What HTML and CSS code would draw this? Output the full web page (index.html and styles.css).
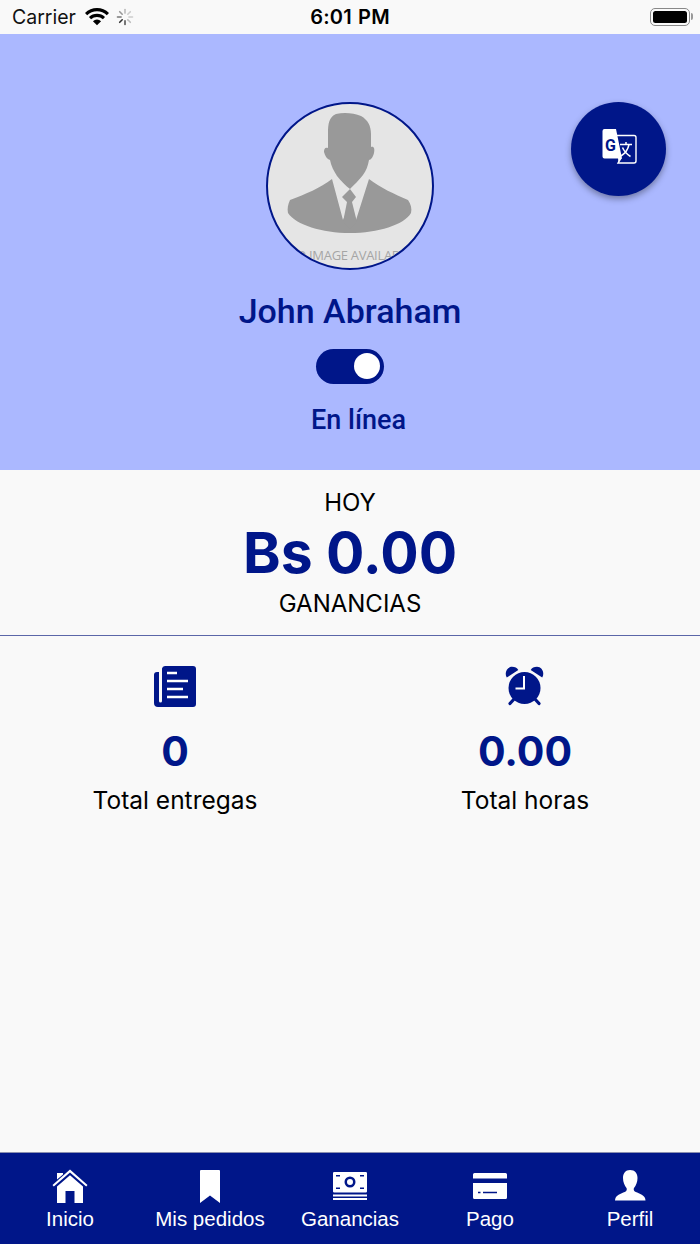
FILE: index.html
```html
<!DOCTYPE html>
<html>
<head>
	<meta charset="utf-8">
	<title>Inicio</title>
	<link rel="stylesheet" href="styles.css">
</head>
<body>
<div class="app">
	<div class="status">
		<div class="status-left">
			<span class="carrier">Carrier</span>
			<svg class="wifi" width="24" height="18" viewBox="0 0 26 19">
				<path d="M13 18.500 8.600 14a6.300 6.300 0 0 1 8.800 0z" fill="#000"/>
				<path d="M6.600 12 4.300 9.600a12.400 12.400 0 0 1 17.400 0L19.400 12a9.100 9.100 0 0 0-12.800 0z" fill="#000"/>
				<path d="M2.400 7.600 0 5.200a18.400 18.400 0 0 1 26 0l-2.400 2.400a15 15 0 0 0-21.200 0z" fill="#000"/>
			</svg>
			<svg class="spin" width="18" height="18" viewBox="0 0 18 18" stroke-width="1.600" stroke-linecap="round">
				<path d="M9 1.500v3.600" stroke="#bbb"/>
				<path d="M14.300 3.700l-2.500 2.500" stroke="#ccc"/>
				<path d="M16.500 9h-3.600" stroke="#ccc"/>
				<path d="M14.300 14.300l-2.500-2.500" stroke="#bbb"/>
				<path d="M9 16.500v-3.600" stroke="#555"/>
				<path d="M3.700 14.300l2.500-2.500" stroke="#333"/>
				<path d="M1.500 9h3.600" stroke="#777"/>
				<path d="M3.700 3.700l2.500 2.500" stroke="#999"/>
			</svg>
		</div>
		<span class="time">6:01 PM</span>
		<div class="battery"><i></i></div>
	</div>

	<div class="head">
		<div class="avatar">
			<svg width="164" height="164" viewBox="0 0 164 164">
				<!-- suit -->
				<path fill="#999" d="M64 75C52 84 38 90 22 96c-2 4-3 9-2 13 8 12 34 20 62 20s54-8 61-20c1-4 0-9-3-13-14-6-27-12-39-21z"/>
				<!-- shirt -->
				<path fill="#e5e5e5" d="M64 75 75 116 82 100 88 116 101 75z"/>
				<!-- tie -->
				<path fill="#999" d="M82 85l6 8-4 5 5 20-7 7-7-7 4-20-5-5z"/>
				<!-- head -->
				<path fill="#999" d="M68 10c8-2 18-1 25 2 7 4 10 10 10 18v13c3-1 4 2 3 6s-3 7-5 7c-1 6-3 11-6 15-4 5-9 10-13 14-4-3-9-8-13-13-3-5-6-10-7-16-3-1-5-4-6-8 0-3 1-5 4-4V29c0-9 1-16 8-19z"/>
				<text class="noimg" x="82" y="156" text-anchor="middle">NO IMAGE AVAILABLE</text>
			</svg>
		</div>
		<h1 class="name">John Abraham</h1>
		<div class="toggle"><i></i></div>
		<p class="online">En línea</p>
		<div class="fab">
			<svg width="36" height="36" viewBox="0 0 36 36">
				<path fill="#001689" stroke="#fff" stroke-width="1.400" d="M14 6.500h19a2 2 0 0 1 2 2V32a2 2 0 0 1-2 2H17l2-3.500z"/>
				<path fill="#fff" d="M3.500 0H15l6 29.500H3.500a2 2 0 0 1-2-2V2a2 2 0 0 1 2-2z"/>
				<path fill="#fff" d="M17 29h4l-3.500 5z"/>
				<text class="fab-g" x="9.500" y="21.700" text-anchor="middle">G</text>
				<path fill="none" stroke="#fff" stroke-width="1.500" d="M19 15.500h12M25 13v2.500M28 15.500c-1 5-4 9-8 11.500M21.500 18.500c1.500 3.500 4 6.500 8 9"/>
			</svg>
		</div>
	</div>

	<div class="today">
		<div class="today-top">HOY</div>
		<div class="amount">Bs 0.00</div>
		<div class="today-sub">GANANCIAS</div>
	</div>

	<div class="stats">
		<div class="stat">
			<svg width="44" height="44" viewBox="0 0 44 44">
				<path fill="#001689" d="M9 3.500a3 3 0 0 1 3-2.500h28a3 3 0 0 1 3 3v35a3 3 0 0 1-3 3H5a4 4 0 0 1-4-4V10a3 3 0 0 1 3-3h2v29a1.500 1.500 0 0 0 3 0z"/>
				<path stroke="#fff" stroke-width="2.600" d="M14 8h10M14 16h21M14 24h16M14 32h21"/>
			</svg>
			<div class="stat-num">0</div>
			<div class="stat-label">Total entregas</div>
		</div>
		<div class="stat">
			<svg width="44" height="44" viewBox="0 0 44 44">
				<circle cx="21.500" cy="23" r="16" fill="#001689"/>
				<path fill="#001689" d="M3.800 12.500C1 8 4 1.800 9 1.800c3 0 5 1 6.300 3.200zM39.200 12.500C42 8 39 1.800 34 1.800c-3 0-5 1-6.300 3.200z"/>
				<path stroke="#001689" stroke-width="3.200" stroke-linecap="round" d="M12 33l-5 5.500M31 33l5 5.500"/>
				<path fill="none" stroke="#fff" stroke-width="2" d="M21 11v12.500H12.500"/>
			</svg>
			<div class="stat-num">0.00</div>
			<div class="stat-label">Total horas</div>
		</div>
	</div>

	<div class="tabs">
		<div class="tab">
			<svg width="36" height="36" viewBox="0 0 36 36">
				<path fill="#fff" d="M.500 16 18 .500 35.500 16l-1.300 1.500L18 3.500 1.800 17.500zM5 4h6v1.500L5 10.500z"/>
				<path fill="#fff" fill-rule="evenodd" d="M5 17.500 18 6.200l13 11.300V34H5zM13.500 22v12h9V22z"/>
			</svg>
			<span>Inicio</span>
		</div>
		<div class="tab">
			<svg width="36" height="36" viewBox="0 0 36 36">
				<path fill="#fff" d="M8 2a1 1 0 0 1 1-1h18a1 1 0 0 1 1 1v32l-10-7.500L8 34z"/>
			</svg>
			<span>Mis pedidos</span>
		</div>
		<div class="tab">
			<svg width="36" height="36" viewBox="0 0 36 36">
				<path fill="#fff" fill-rule="evenodd" d="M2 3h32a1.500 1.500 0 0 1 1 1v18.500a1.500 1.500 0 0 1-1 1H2a1.500 1.500 0 0 1-1-1V4a1.500 1.500 0 0 1 1-1zM18 7.500a5.500 5.500 0 1 0 0 11 5.500 5.500 0 0 0 0-11zm0 2.500a3 3 0 1 1 0 6 3 3 0 0 1 0-6zM4 6v1.500h4V6zM28 6v1.500h4V6zM4 18.500V20h4v-1.500zM28 18.500V20h4v-1.500z"/>
				<path stroke="#fff" stroke-width="2" d="M1 26.500h34M1 30h34"/>
			</svg>
			<span>Ganancias</span>
		</div>
		<div class="tab">
			<svg width="36" height="36" viewBox="0 0 36 36">
				<path fill="#fff" d="M2.500 4h31A1.500 1.500 0 0 1 35 5.500V9.500H1V5.500A1.500 1.500 0 0 1 2.500 4zM1 14h34v14.500a1.500 1.500 0 0 1-1.500 1.500h-31A1.500 1.500 0 0 1 1 28.500z"/>
				<path stroke="#001689" stroke-width="1.500" d="M6 23.500h2.500M11 23.500h14"/>
			</svg>
			<span>Pago</span>
		</div>
		<div class="tab">
			<svg width="36" height="36" viewBox="0 0 36 36">
				<path fill="#fff" d="M18 1c5 0 7.500 3.500 7.500 8 0 4-1.500 7.500-3.500 10-.5 1-.3 2.500.5 3.200 3 2 9 3 10.500 6.800.3 1 .5 2 .5 2.500H3c0-.5.200-1.500.5-2.500C5 25.200 11 24.200 14 22.200c.8-.7 1-2.200.5-3.200-2-2.500-3.500-6-3.500-10 0-4.500 2.500-8 7-8z"/>
			</svg>
			<span>Perfil</span>
		</div>
	</div>
</div>
</body>
</html>
```

FILE: styles.css
```css
*{margin:0;padding:0;box-sizing:border-box;}
html,body{height:100%;}
body{background:#f9f9f9;font-family:Inter,"Liberation Sans",sans-serif;color:#000;overflow:hidden;}

.app{width:700px;height:1244px;display:flex;flex-direction:column;}

.status{height:34px;flex:none;background:#f9f9f9;padding:0 12px;display:grid;grid-template-columns:1fr auto 1fr;align-items:center;}
.status-left{display:flex;align-items:center;gap:7px;}
.carrier{font-size:19.500px;color:#111;}
.wifi{margin-left:2px;}
.time{font-size:20px;font-weight:600;letter-spacing:.2px;word-spacing:1px;}
.battery{justify-self:end;width:40px;height:18px;margin-right:-2px;border:1.500px solid #888;border-radius:5px;padding:2px;position:relative;}
.battery i{display:block;width:100%;height:100%;background:#000;border-radius:2.500px;}
.battery:after{content:'';position:absolute;right:-4px;top:4px;width:2px;height:7px;background:#999;border-radius:0 2px 2px 0;}

.head{height:436px;flex:none;background:#abb8ff;position:relative;display:flex;flex-direction:column;align-items:center;padding-top:68px;}
.avatar{width:168px;height:168px;border-radius:50%;border:2px solid #001689;background:#e5e5e5;overflow:hidden;}
.noimg{font-family:"Open Sans",sans-serif;font-size:13px;letter-spacing:-.3px;fill:#a5a5a5;}
.name{font-family:Roboto,sans-serif;font-weight:500;font-size:34px;line-height:40px;color:#001689;margin-top:21px;}
.toggle{width:68px;height:35px;border-radius:18px;background:#001689;margin-top:18px;padding:4px 4px 0 0;display:flex;justify-content:flex-end;}
.toggle i{display:block;width:26px;height:26px;border-radius:50%;background:#fff;}
.online{font-family:Roboto,sans-serif;font-weight:500;font-size:27px;line-height:32px;color:#001689;margin-top:20px;margin-left:17px;}
.fab{position:absolute;left:571px;top:68px;width:95px;height:94px;border-radius:50%;background:#001689;box-shadow:0 3px 6px rgba(0,0,0,.35);display:flex;align-items:center;justify-content:center;padding-bottom:4px;}
.fab-g{font-family:Roboto,sans-serif;font-weight:700;font-size:16px;fill:#001689;}

.today{height:166px;flex:none;border-bottom:1px solid #5b66a8;display:flex;flex-direction:column;align-items:center;padding-top:19px;}
.today-top,.today-sub{font-size:24px;line-height:28px;}
.amount{font-size:57px;line-height:68px;font-weight:700;color:#001689;margin-top:2px;}
.today-sub{margin-top:3px;}

.stats{flex:1;display:grid;grid-template-columns:1fr 1fr;padding-top:29px;align-items:start;}
.stat{display:flex;flex-direction:column;align-items:center;}
.stat-num{font-size:41px;line-height:50px;font-weight:700;color:#001689;margin-top:17px;}
.stat-label{font-size:24.500px;line-height:30px;margin-top:9px;}

.tabs{height:92px;flex:none;background:#001689;border-top:1px solid #8a8fb0;display:grid;grid-template-columns:repeat(5,1fr);padding-top:16px;}
.tab{display:flex;flex-direction:column;align-items:center;color:#fff;font-family:"Liberation Sans",sans-serif;font-size:20.500px;}
.tab span{line-height:24px;margin-top:2px;}
```
